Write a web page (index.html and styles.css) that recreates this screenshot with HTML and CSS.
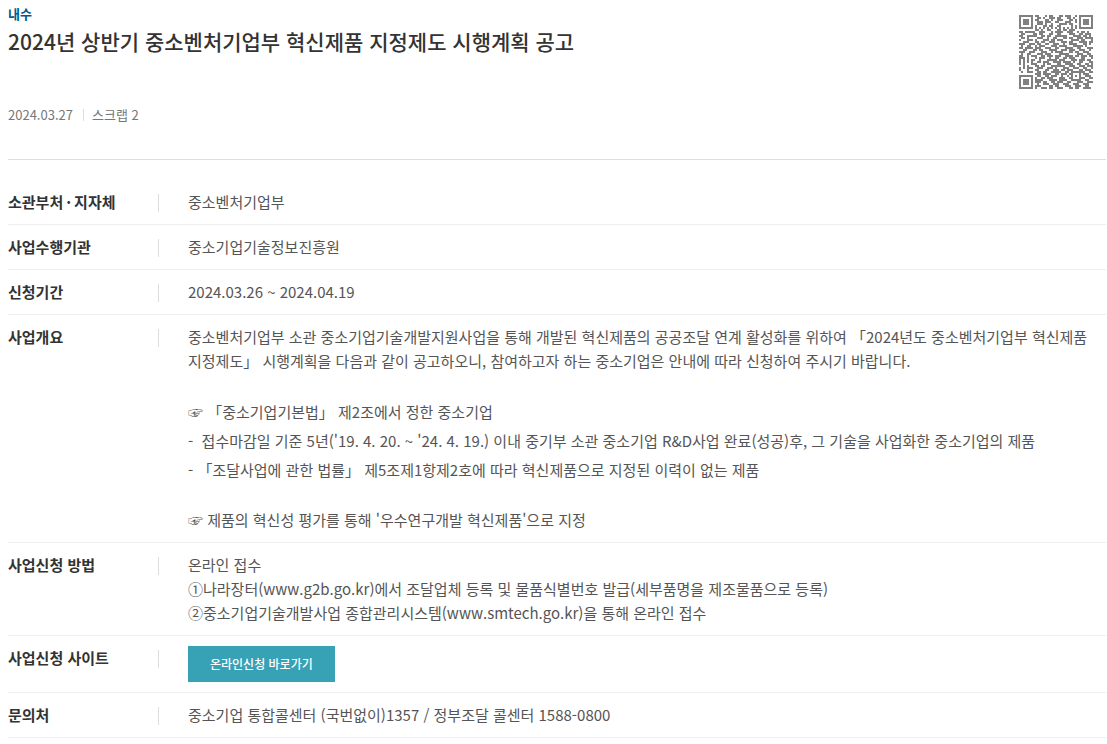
FILE: index.html
```html
<!DOCTYPE html>
<html lang="ko">
<head>
<meta charset="utf-8">
<meta name="viewport" content="width=device-width, initial-scale=1">
<title>2024년 상반기 중소벤처기업부 혁신제품 지정제도 시행계획 공고</title>
<link rel="stylesheet" href="styles.css">
</head>
<body>
<main class="notice">
  <header class="notice-head">
    <div class="heading">
      <p class="category">내수</p>
      <h1 class="title">2024년 상반기 중소벤처기업부 혁신제품 지정제도 시행계획 공고</h1>
      <p class="meta"><span>2024.03.27</span><span class="scrap">스크랩 2</span></p>
    </div>
    <svg class="qr" viewBox="0 0 37 37" role="img" aria-label="QR 코드"><path id="qr-modules"/></svg>
  </header>
  <dl class="details">
    <div class="row"><dt>소관부처<span class="dot">·</span>지자체</dt><dd><div class="value">중소벤처기업부</div></dd></div>
    <div class="row"><dt>사업수행기관</dt><dd><div class="value">중소기업기술정보진흥원</div></dd></div>
    <div class="row"><dt>신청기간</dt><dd><div class="value">2024.03.26 ~ 2024.04.19</div></dd></div>
    <div class="row"><dt>사업개요</dt><dd><div class="value overview">
      <p>중소벤처기업부 소관 중소기업기술개발지원사업을 통해 개발된 혁신제품의 공공조달 연계 활성화를 위하여 「2024년도 중소벤처기업부 혁신제품 지정제도」 시행계획을 다음과 같이 공고하오니, 참여하고자 하는 중소기업은 안내에 따라 신청하여 주시기 바랍니다.</p>
      <div class="target">
        <p>☞ 「중소기업기본법」 제2조에서 정한 중소기업</p>
        <p>-&nbsp; 접수마감일 기준 5년('19. 4. 20. ~ '24. 4. 19.) 이내 중기부 소관 중소기업 R&amp;D사업 완료(성공)후, 그 기술을 사업화한 중소기업의 제품</p>
        <p>- 「조달사업에 관한 법률」 제5조제1항제2호에 따라 혁신제품으로 지정된 이력이 없는 제품</p>
      </div>
      <p>☞ 제품의 혁신성 평가를 통해 '우수연구개발 혁신제품'으로 지정</p>
    </div></dd></div>
    <div class="row"><dt>사업신청 방법</dt><dd><div class="value">
      <p>온라인 접수</p>
      <p>①나라장터(www.g2b.go.kr)에서 조달업체 등록 및 물품식별번호 발급(세부품명을 제조물품으로 등록)</p>
      <p>②중소기업기술개발사업 종합관리시스템(www.smtech.go.kr)을 통해 온라인 접수</p>
    </div></dd></div>
    <div class="row"><dt>사업신청 사이트</dt><dd><div class="value"><a class="apply" href="#">온라인신청 바로가기</a></div></dd></div>
    <div class="row"><dt>문의처</dt><dd><div class="value">중소기업 통합콜센터 (국번없이)1357 / 정부조달 콜센터 1588-0800</div></dd></div>
  </dl>
</main>
<script src="qr.js"></script>
</body>
</html>
```

FILE: styles.css
```css
* { box-sizing: border-box; }

body {
  margin: 0;
  background: #fff;
  color: #555;
  font: 400 15px/24px "Noto Sans CJK KR", "Noto Sans", sans-serif;
  word-break: keep-all;
}

p, h1, dl, dd { margin: 0; }

.notice { padding: 4px 1px 0 8px; }

.notice-head {
  display: flex;
  justify-content: space-between;
  align-items: flex-start;
  gap: 24px;
  padding-bottom: 32px;
  border-bottom: 1px solid #ddd;
}

.category {
  color: #005a8c;
  font-size: 13px;
  font-weight: 700;
  line-height: 20px;
}

.title {
  color: #333;
  font-size: 21px;
  font-weight: 500;
  line-height: 34px;
}

.meta {
  display: flex;
  align-items: center;
  margin-top: 45px;
  color: #777;
  font-size: 13px;
  line-height: 24px;
}

.scrap {
  display: flex;
  align-items: center;
}

.scrap::before {
  content: "";
  width: 1px;
  height: 12px;
  margin: 0 8px 0 10px;
  background: #ddd;
}

.qr {
  flex: none;
  width: 74px;
  height: 74px;
  margin: 11px 13px 0 0;
  fill: #808080;
  shape-rendering: crispEdges;
}

.details { padding-top: 20px; }

.row {
  display: flex;
  padding: 10px 0;
  border-bottom: 1px solid #eee;
}

dt {
  flex: none;
  width: 150px;
  color: #333;
  font-weight: 700;
}

.dot { padding: 0 3px; }

dd {
  display: flex;
  flex: 1;
  min-width: 0;
}

dd::before {
  content: "";
  flex: none;
  width: 1px;
  height: 18px;
  margin: 4px 29px 0 0;
  background: #ddd;
}

.value {
  flex: 1;
  min-width: 0;
}

.overview {
  display: grid;
  gap: 24px;
}

.target { line-height: 29px; }

.apply {
  display: block;
  width: fit-content;
  padding: 6px 22px;
  background: #37a1b6;
  color: #fff;
  font-size: 12px;
  font-weight: 500;
  text-decoration: none;
}
```

FILE: qr.js
```js
const modules = [
  "1111111011000101100011011100101111111",
  "1000001001101001110110001101001000001",
  "1011101011000110100111000110101011101",
  "1011101001110111001100011100101011101",
  "1011101001110100100011110110001011101",
  "1000001010001101100110000010101000001",
  "1111111010101010101010101010101111111",
  "0000000011010011000110110111000000000",
  "1101111100111000101111001110010110100",
  "0110000110110001100110000111001101110",
  "1100111110011011001111110001111011010",
  "0110100001110010011000110110011101111",
  "1000111010001110110111000011110110001",
  "0011100011011001110001110110001111011",
  "1110011101100110011100100111100011010",
  "0100110010111000111011110001111101000",
  "1101111011100111001100011110011000111",
  "0011000110110001111001110111001110010",
  "1110011100011100101111000110110011100",
  "0100110001110111000011111000011100110",
  "1100101110011011101110011110110111011",
  "1110100010111001001100110111000110001",
  "1010101100100011111011100011101110110",
  "1010101001101110011110111101001100011",
  "1010001110001011000110011110011001101",
  "0010100011011000111111100111001110111",
  "1010111001110011101000111001110011001",
  "1000100011000110011101101110001101110",
  "0100111001101100111110011011111110011",
  "0000000011101111001101110110001011100",
  "1111111001100110111001001010101001110",
  "1000001010011011100011100110001110011",
  "1011101011110001111011110011111001100",
  "1011101011101100110111001100011100111",
  "1011101001001110011100111001110011100",
  "1000001011100001101100011100111001100",
  "1111111010011101100111000110110011110"
];

const path = modules.map((line, y) =>
  [...line].map((cell, x) => cell === "1" ? `M${x} ${y}h1v1h-1z` : "").join("")
).join("");

document.getElementById("qr-modules").setAttribute("d", path);
```
